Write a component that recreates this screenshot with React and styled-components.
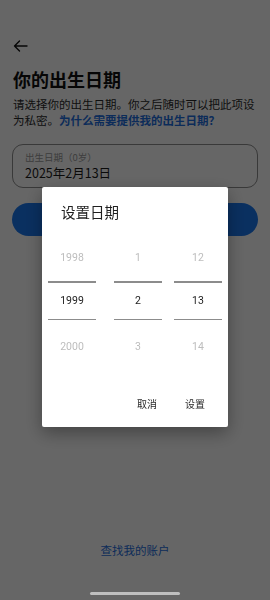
import React from "react";
import styled, { createGlobalStyle } from "styled-components";

const Global = createGlobalStyle`
   html, body {
      margin: 0;
      padding: 0;
      background: #ffffff;
   }
   body {
      font-family: Roboto, "Noto Sans CJK SC", sans-serif;
   }
`;

const Page = styled.div`
   width: 270px;
   height: 600px;
   box-sizing: border-box;
   padding: 38px 12px 0;
   display: flex;
   flex-direction: column;
   background: #ffffff;
   overflow: hidden;
`;

const Back = styled.button`
   width: 18px;
   height: 16px;
   padding: 0;
   margin-left: 1px;
   border: none;
   background: none;
   display: flex;
   align-items: center;
   color: #111111;
`;

const Title = styled.h1`
   margin: 12px 0 0 1px;
   font-family: "Noto Sans CJK SC", sans-serif;
   font-size: 18px;
   line-height: 26px;
   font-weight: 700;
   color: #111111;
`;

const Desc = styled.p`
   margin: 4px 0 0 1px;
   font-family: "Noto Sans CJK SC", sans-serif;
   font-size: 11.5px;
   line-height: 16px;
   color: #2a2a2a;
`;

const Link = styled.span`
   color: #1f6fe0;
   font-weight: 700;
`;

const Field = styled.div`
   margin-top: 16px;
   height: 44px;
   box-sizing: border-box;
   border: 1px solid #8e8e8e;
   border-radius: 11px;
   padding: 5px 12px 0;
   display: flex;
   flex-direction: column;
`;

const FieldLabel = styled.span`
   font-family: "Noto Sans CJK SC", sans-serif;
   font-size: 9.5px;
   line-height: 14px;
   color: #9a9a9a;
`;

const FieldValue = styled.span`
   font-family: "Noto Sans CJK SC", sans-serif;
   font-size: 12.5px;
   line-height: 18px;
   color: #1a1a1a;
`;

const Primary = styled.button`
   margin-top: 15px;
   height: 33px;
   border: none;
   border-radius: 17px;
   background: #1a78f0;
`;

const Spacer = styled.div`
   flex: 1;
`;

const FindLink = styled.a`
   align-self: center;
   margin-bottom: 42px;
   font-family: "Noto Sans CJK SC", sans-serif;
   font-size: 11.5px;
   line-height: 16px;
   color: #1f6fe0;
   text-decoration: none;
`;

const Scrim = styled.div`
   position: fixed;
   inset: 0;
   background: rgba(0, 0, 0, 0.6);
   display: flex;
   justify-content: center;
   align-items: flex-start;
   padding-top: 187px;
   box-sizing: border-box;
`;

const Dialog = styled.div`
   width: 186px;
   height: 240px;
   box-sizing: border-box;
   background: #ffffff;
   border-radius: 2px;
   box-shadow: 0 6px 18px rgba(0, 0, 0, 0.35);
   padding: 15px 0 0;
   display: flex;
   flex-direction: column;
`;

const DialogTitle = styled.div`
   padding-left: 19px;
   font-family: "Noto Sans CJK SC", sans-serif;
   font-size: 14.5px;
   line-height: 20px;
   color: #1f1f1f;
`;

const Pickers = styled.div`
   margin-top: 11px;
   padding: 0 6px;
   display: flex;
`;

const Column = styled.div`
   width: 48px;
   margin-left: ${(p) => p.$gap || 0}px;
   display: flex;
   flex-direction: column;
`;

const Item = styled.div`
   height: ${(p) => p.$h}px;
   display: flex;
   align-items: center;
   justify-content: center;
   font-family: Roboto, sans-serif;
   font-size: 10.5px;
   color: ${(p) => (p.$active ? "#222222" : "#bdbdbd")};
`;

const Divider = styled.div`
   height: 1.5px;
   background: #8c8c8c;
`;

const Actions = styled.div`
   margin-top: auto;
   margin-bottom: 12px;
   padding-right: 15px;
   display: flex;
   justify-content: flex-end;
   gap: 12px;
`;

const ActionButton = styled.button`
   padding: 4px 8px;
   border: none;
   background: none;
   font-family: "Noto Sans CJK SC", sans-serif;
   font-size: 10px;
   line-height: 14px;
   color: #2a2a2a;
`;

const HomeBar = styled.div`
   position: fixed;
   left: 90px;
   top: 592px;
   width: 90px;
   height: 3px;
   border-radius: 2px;
   background: #bfbfbf;
`;

const columns = [
   { gap: 0, values: ["1998", "1999", "2000"] },
   { gap: 18, values: ["1", "2", "3"] },
   { gap: 12, values: ["12", "13", "14"] },
];

export default function App() {
   return (
      <>
         <Global />
         <Page>
            <Back aria-label="返回">
               <svg width="15" height="12" viewBox="0 0 15 12" fill="none">
                  <path
                     d="M14 6H1.5M6.5 1L1.5 6l5 5"
                     stroke="currentColor"
                     strokeWidth="1.4"
                     strokeLinecap="round"
                     strokeLinejoin="round"
                  />
               </svg>
            </Back>
            <Title>你的出生日期</Title>
            <Desc>
               请选择你的出生日期。你之后随时可以把此项设为私密。
               <Link>为什么需要提供我的出生日期？</Link>
            </Desc>
            <Field>
               <FieldLabel>出生日期（0岁）</FieldLabel>
               <FieldValue>2025年2月13日</FieldValue>
            </Field>
            <Primary />
            <Spacer />
            <FindLink href="#find">查找我的账户</FindLink>
         </Page>
         <Scrim>
            <Dialog>
               <DialogTitle>设置日期</DialogTitle>
               <Pickers>
                  {columns.map((c, i) => (
                     <Column key={i} $gap={c.gap}>
                        <Item $h={48}>{c.values[0]}</Item>
                        <Divider />
                        <Item $h={36} $active>
                           {c.values[1]}
                        </Item>
                        <Divider />
                        <Item $h={52}>{c.values[2]}</Item>
                     </Column>
                  ))}
               </Pickers>
               <Actions>
                  <ActionButton>取消</ActionButton>
                  <ActionButton>设置</ActionButton>
               </Actions>
            </Dialog>
         </Scrim>
         <HomeBar />
      </>
   );
}
